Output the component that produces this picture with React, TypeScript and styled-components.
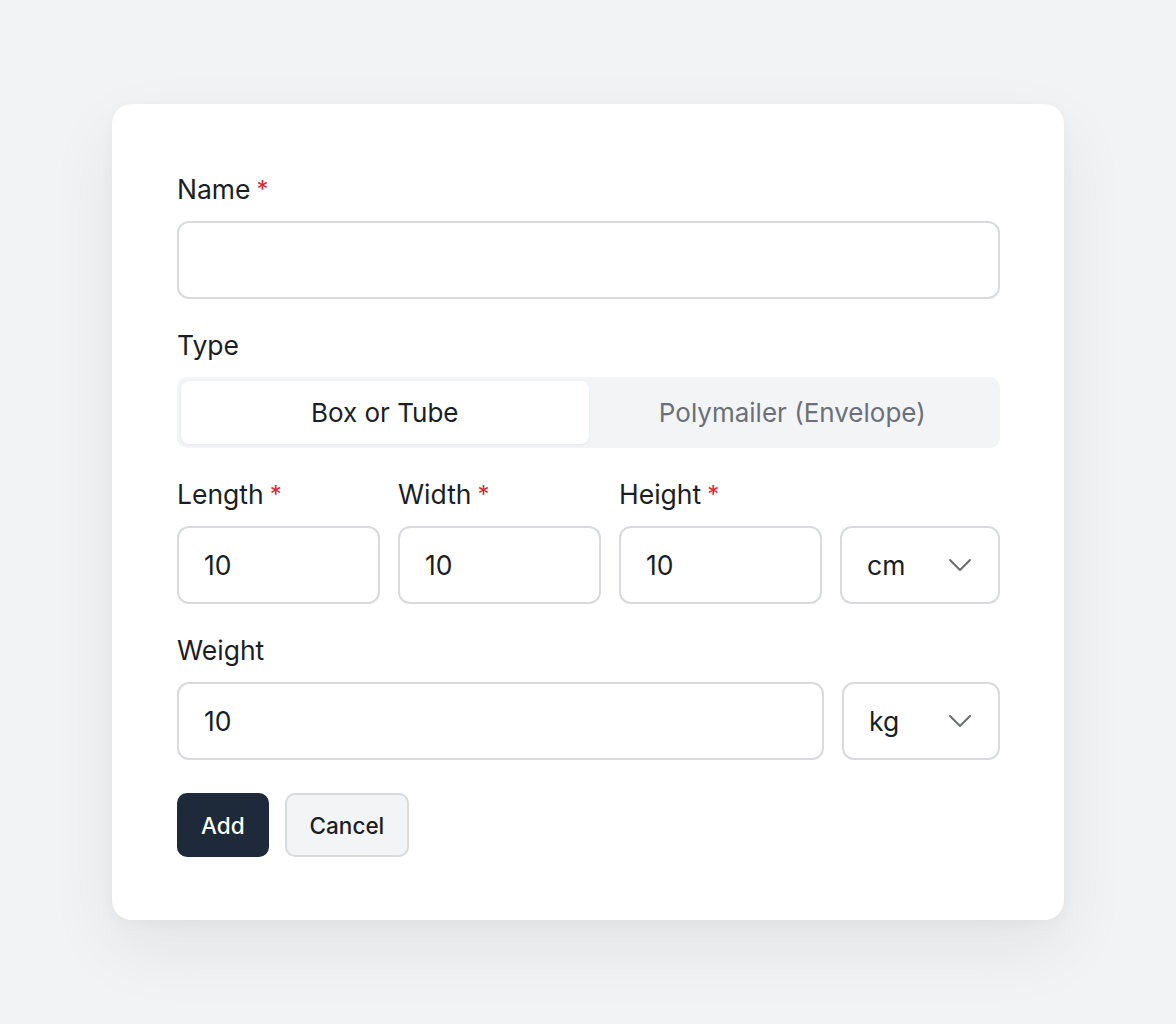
import * as React from "react";
import styled, { createGlobalStyle } from "styled-components";

const GlobalStyle = createGlobalStyle`
    html, body {
        margin: 0;
        padding: 0;
        background: #f2f3f4;
    }
    body {
        font-family: Inter, "Open Sans", "Liberation Sans", sans-serif;
        color: #1b1e25;
    }
`;

const Page = styled.div`
    min-height: 1024px;
    padding-top: 104px;
    box-sizing: border-box;
`;

const Card = styled.form`
    width: 952px;
    margin: 0 auto;
    box-sizing: border-box;
    padding: 67px 64px 63px 65px;
    background: #ffffff;
    border-radius: 20px;
    box-shadow: 0 28px 70px rgba(20, 24, 40, 0.07), 0 4px 14px rgba(20, 24, 40, 0.03);
    display: flex;
    flex-direction: column;
    gap: 28px;
`;

const Field = styled.div`
    display: flex;
    flex-direction: column;
    gap: 14px;
`;

const Label = styled.label`
    font-size: 26.5px;
    line-height: 36px;
    height: 36px;
    font-weight: 400;
    color: #1b1e25;
    white-space: nowrap;
`;

const Required = styled.span`
    color: #e0242f;
    margin-left: 6px;
    font-size: 24px;
    vertical-align: 1px;
`;

const TextInput = styled.input`
    display: block;
    width: 100%;
    height: 78px;
    box-sizing: border-box;
    border: 2px solid #d9dadd;
    border-radius: 12px;
    padding: 0 25px;
    font-family: inherit;
    font-size: 26.5px;
    color: #1b1e25;
    background: #fff;
    outline: none;
`;

const Segmented = styled.div`
    display: grid;
    grid-template-columns: 1fr 1fr;
    height: 71px;
    box-sizing: border-box;
    padding: 4px;
    background: #f3f4f6;
    border-radius: 10px;
`;

const SegmentButton = styled.button<{ $active?: boolean }>`
    border: none;
    border-radius: 8px;
    font-family: inherit;
    font-size: 26px;
    cursor: pointer;
    background: ${(p) => (p.$active ? "#ffffff" : "transparent")};
    color: ${(p) => (p.$active ? "#1b1e25" : "#6b7079")};
    box-shadow: ${(p) => (p.$active ? "0 1px 3px rgba(0, 0, 0, 0.06)" : "none")};
`;

const Row = styled.div<{ $columns: string }>`
    display: grid;
    grid-template-columns: ${(p) => p.$columns};
    column-gap: 18px;
    row-gap: 14px;
    align-items: end;
`;

const SelectBox = styled.div`
    height: 78px;
    box-sizing: border-box;
    border: 2px solid #d9dadd;
    border-radius: 12px;
    padding: 0 26px 0 25px;
    display: flex;
    align-items: center;
    justify-content: space-between;
    font-size: 26.5px;
    color: #1b1e25;
    background: #fff;
    cursor: pointer;
`;

const Actions = styled.div`
    display: flex;
    gap: 16px;
    margin-top: 5px;
`;

const Button = styled.button<{ $primary?: boolean }>`
    height: 64px;
    box-sizing: border-box;
    padding: 0 ${(p) => (p.$primary ? "24px" : "23px")};
    border-radius: 10px;
    font-family: inherit;
    font-size: 22.5px;
    font-weight: 500;
    cursor: pointer;
    border: ${(p) => (p.$primary ? "none" : "2px solid #d9dadd")};
    background: ${(p) => (p.$primary ? "#1e2939" : "#f3f4f6")};
    color: ${(p) => (p.$primary ? "#ffffff" : "#1b1e25")};
`;

const Chevron = () => (
    <svg width="24" height="14" viewBox="0 0 24 14" fill="none">
        <polyline points="2,2 12,12 22,2" stroke="#6b6d72" strokeWidth="2" strokeLinecap="round" strokeLinejoin="round" />
    </svg>
);

const UnitSelect = ({ value }: { value: string }) => (
    <SelectBox>
        <span>{value}</span>
        <Chevron />
    </SelectBox>
);

const App = () => {
    const [type, setType] = React.useState("box");

    return (
        <Page>
            <GlobalStyle />
            <Card onSubmit={(e) => e.preventDefault()}>
                <Field>
                    <Label>
                        Name<Required>*</Required>
                    </Label>
                    <TextInput type="text" />
                </Field>

                <Field>
                    <Label>Type</Label>
                    <Segmented>
                        <SegmentButton type="button" $active={type === "box"} onClick={() => setType("box")}>
                            Box or Tube
                        </SegmentButton>
                        <SegmentButton type="button" $active={type === "env"} onClick={() => setType("env")}>
                            Polymailer (Envelope)
                        </SegmentButton>
                    </Segmented>
                </Field>

                <Row $columns="203px 203px 203px 1fr">
                    <Label>
                        Length<Required>*</Required>
                    </Label>
                    <Label>
                        Width<Required>*</Required>
                    </Label>
                    <Label>
                        Height<Required>*</Required>
                    </Label>
                    <span />
                    <TextInput defaultValue="10" />
                    <TextInput defaultValue="10" />
                    <TextInput defaultValue="10" />
                    <UnitSelect value="cm" />
                </Row>

                <Row $columns="1fr 158px">
                    <Label>Weight</Label>
                    <span />
                    <TextInput defaultValue="10" />
                    <UnitSelect value="kg" />
                </Row>

                <Actions>
                    <Button type="submit" $primary>
                        Add
                    </Button>
                    <Button type="button">Cancel</Button>
                </Actions>
            </Card>
        </Page>
    );
};

export default App;
